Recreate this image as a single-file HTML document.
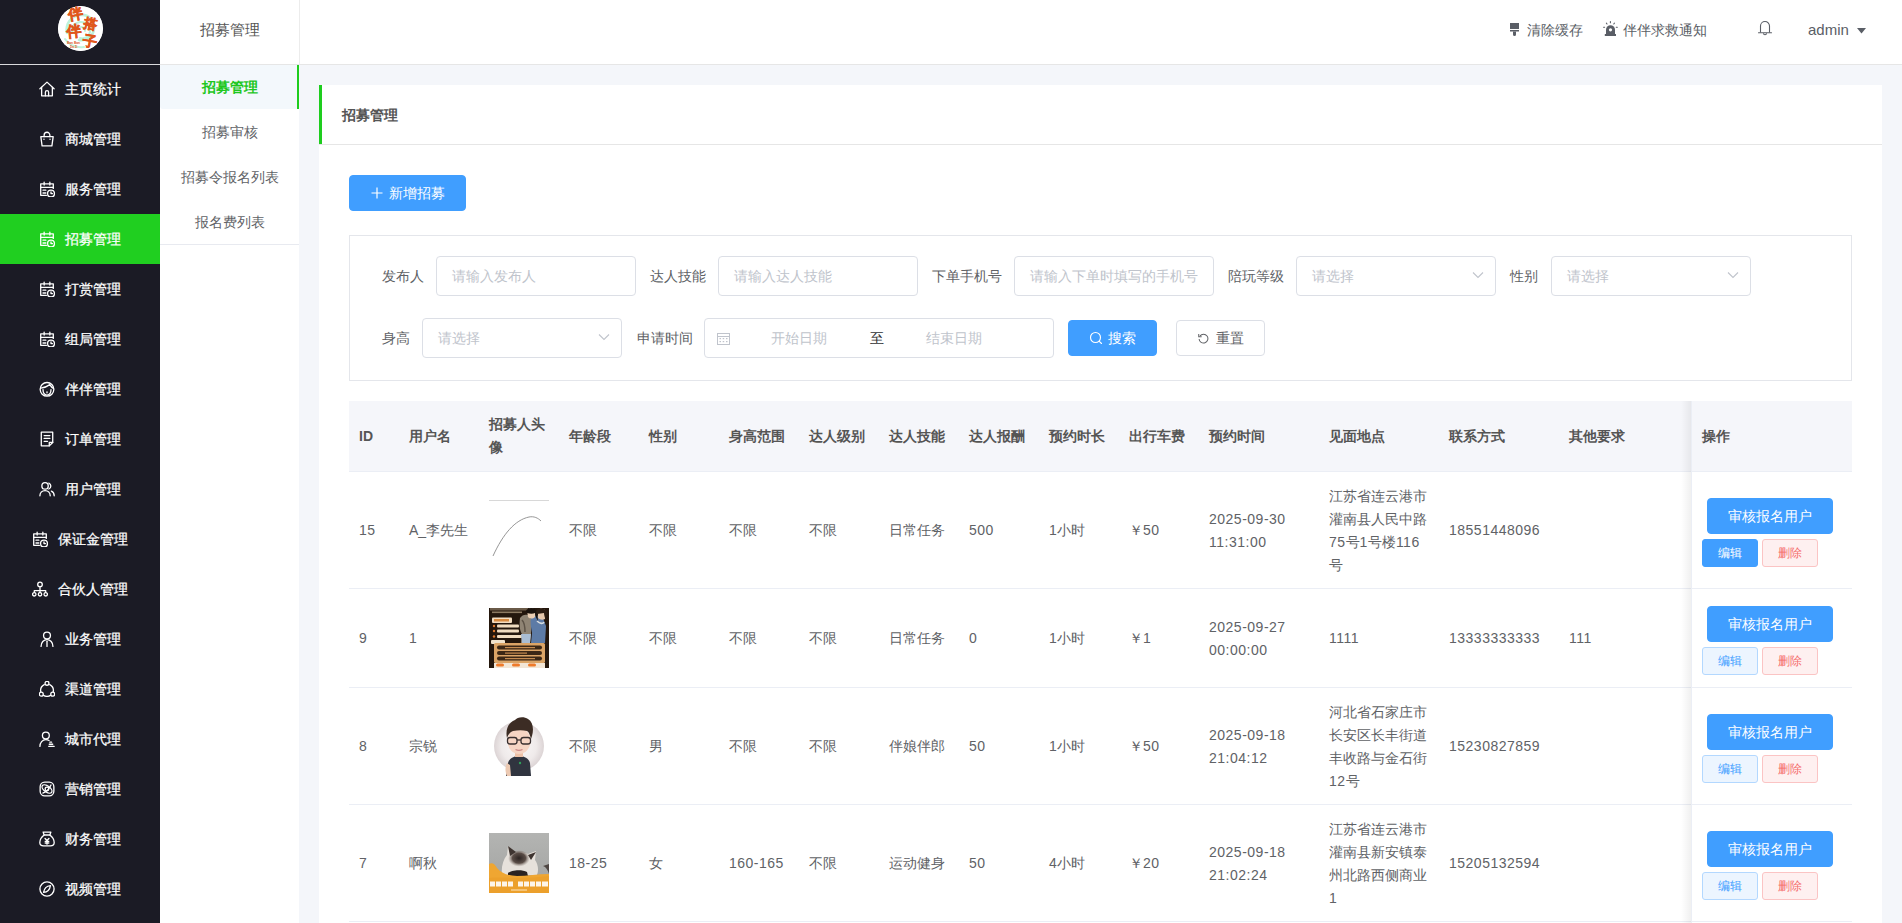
<!DOCTYPE html>
<html><head><meta charset="utf-8">
<style>
*{box-sizing:border-box;margin:0;padding:0}
html,body{width:1902px;height:923px;overflow:hidden}
body{font-family:"Liberation Sans",sans-serif;font-size:14px;color:#606266;background:#f4f6fa;position:relative}
.abs{position:absolute}
/* sidebar */
#sb{position:absolute;left:0;top:0;width:160px;height:923px;background:#1b1b25}
#sb .logo{position:absolute;left:58px;top:6px;width:45px;height:45px;border-radius:50%;background:#fff;overflow:hidden}
#sb .line{position:absolute;left:0;top:64px;width:160px;height:1px;background:#d9d9dc}
#sb .it{position:absolute;left:0;width:160px;height:50px;display:flex;align-items:center;justify-content:center;color:#fff;font-size:14px}
#sb .it span{position:relative;top:1px;-webkit-text-stroke:0.25px #fff}
#sb .it svg{width:16px;height:16px;margin-right:10px;flex:none}
#sb .it.on{background:#20cf20}
/* sidebar2 */
#sb2{position:absolute;left:160px;top:0;width:139px;height:923px;background:#fff}
#sb2 .hd{position:absolute;left:0;top:0;width:139px;height:64px;line-height:60px;text-align:center;color:#555;font-size:15px;font-weight:normal}
#sb2 .hdl{position:absolute;left:0;top:64px;width:140px;height:1px;background:#e6e6e6}
#sb2 .vl{position:absolute;left:139px;top:0;width:1px;height:64px;background:#ececec}
#sb2 .m{position:absolute;left:0;width:139px;height:45px;line-height:47px;text-align:center;color:#606266}
#sb2 .m.on{color:#1ec71e;background:#f3f8fc;border-radius:3px 0 0 3px;font-weight:bold}
#sb2 .bar{position:absolute;left:137px;top:65px;width:2px;height:44px;background:#1ecd1e}
#sb2 .bl{position:absolute;left:0;top:244px;width:139px;height:1px;background:#e8eaf0}
/* header */
#hdr{position:absolute;left:300px;top:0;width:1602px;height:64px;background:#fff}
#hdrl{position:absolute;left:299px;top:64px;width:1603px;height:1px;background:#e6e6e6}
.nav{position:absolute;top:0;height:64px;line-height:60px;color:#5a5e66;font-size:14px}
/* card */
#card{position:absolute;left:319px;top:85px;width:1563px;height:900px;background:#fff}
#card .gb{position:absolute;left:0;top:0;width:3px;height:60px;background:#1ecd1e}
#card .title{position:absolute;left:23px;top:0;height:59px;line-height:61px;color:#555;font-weight:600}
#card .hl{position:absolute;left:0;top:59px;width:1563px;height:1px;background:#e6e6e6}
.btn{position:absolute;border-radius:4px;text-align:center;font-size:14px;white-space:nowrap}
.btn-p{background:#409eff;color:#fff;border:1px solid #409eff}
.ipt{position:absolute;height:40px;border:1px solid #dcdfe6;border-radius:4px;color:#c0c4cc;line-height:38px;padding-left:15px;font-size:14px;background:#fff;white-space:nowrap;overflow:hidden}
.ipt .chev{position:absolute;right:11px;top:14px;width:12px;height:8px}
.lbl{position:absolute;line-height:40px;color:#606266;font-size:14px;white-space:nowrap}
.th{position:absolute;top:401px;height:70px;display:flex;align-items:center;line-height:23px;font-weight:bold;color:#555;font-size:14px}
.td{position:absolute;line-height:23px;color:#606266;font-size:14px;white-space:nowrap}
.n{letter-spacing:0.5px}
.eb{width:56px;height:28px;line-height:26px;font-size:12px;background:#ecf5ff;border:1px solid #b3d8ff;color:#409eff;border-radius:3px}
.ebp{width:56px;height:28px;line-height:26px;font-size:12px;background:#409eff;border:1px solid #409eff;color:#fff;border-radius:3px}
.db{width:56px;height:28px;line-height:26px;font-size:12px;background:#fef0f0;border:1px solid #fbc4c4;color:#f56c6c;border-radius:3px}
</style></head>
<body>
<!-- SIDEBAR -->
<div id="sb">
  <div class="logo"><svg width="45" height="45" viewBox="0 0 45 45">
<circle cx="22.5" cy="22.5" r="22.5" fill="#fff"/>
<g fill="none" stroke="#bdf3dc" stroke-linecap="round">
<path d="M9 27c-2-9 4-17 13-18 9-1 15 6 14 14-1 8-8 12-15 11" stroke-width="2.6"/>
<path d="M14 27c-1-6 3-11 9-11 6 0 10 5 9 10-1 5-5 7-10 6" stroke-width="2.2"/>
<path d="M19 26c0-3 2-5 4-5 3 0 4 2 4 4" stroke-width="1.8"/>
<path d="M7 33c4 6 11 9 19 8" stroke-width="2"/>
</g>
<g fill="#e0571c" stroke="#e0571c" stroke-width="0.5" font-family="Liberation Serif,serif" font-weight="bold">
<text x="10" y="13" font-size="15" transform="rotate(-10 15 6)">伴</text>
<text x="8.5" y="30.5" font-size="15" transform="rotate(-6 15 24)">伴</text>
<text x="26" y="22" font-size="13.5" transform="rotate(12 32 16)">搭</text>
<text x="25" y="40" font-size="14.5" transform="rotate(10 31 33)">子</text>
</g>
<g fill="#e0571c" font-family="Liberation Sans" font-weight="bold"><text x="9" y="38" font-size="3.2">Ban Ban</text><text x="12" y="42" font-size="3">Da Zi</text></g>
</svg></div>
  <div class="line"></div>
  <div class="it" style="top:64px"><svg width="16" height="16" viewBox="1 1 14 14" ><g fill="none" stroke="#fff" stroke-width="1.15" stroke-linecap="round" stroke-linejoin="round"><path d="M1.8 7.8L8 2l6.2 5.8"/><path d="M3.3 6.6V14h9.4V6.6"/><path d="M6.6 14v-3.2a1.4 1.4 0 0 1 2.8 0V14"/></g></svg><span>主页统计</span></div>
<div class="it" style="top:114px"><svg width="16" height="16" viewBox="1 1 14 14" ><g fill="none" stroke="#fff" stroke-width="1.15" stroke-linecap="round" stroke-linejoin="round"><path d="M2.6 6h10.8l-1.1 8H3.7z"/><path d="M5.5 6V4.6a2.5 2.5 0 0 1 5 0V6"/><path d="M5.3 8.2h.1M10.6 8.2h.1"/></g></svg><span>商城管理</span></div>
<div class="it" style="top:164px"><svg width="16" height="16" viewBox="1 1 14 14" ><g fill="none" stroke="#fff" stroke-width="1.15" stroke-linecap="round" stroke-linejoin="round"><path d="M7.5 13.5H2.5V3.5H13.5V7.5"/><path d="M2.5 6.5H13.5"/><path d="M5.5 2v2.5M10.5 2v2.5"/><path d="M4.5 9h2.5M4.5 11.5h2.5"/><circle cx="11.5" cy="12" r="3"/><path d="M11.5 10.5V12h1.3"/></g></svg><span>服务管理</span></div>
<div class="it on" style="top:214px"><svg width="16" height="16" viewBox="1 1 14 14" ><g fill="none" stroke="#fff" stroke-width="1.15" stroke-linecap="round" stroke-linejoin="round"><path d="M7.5 13.5H2.5V3.5H13.5V7.5"/><path d="M2.5 6.5H13.5"/><path d="M5.5 2v2.5M10.5 2v2.5"/><path d="M4.5 9h2.5M4.5 11.5h2.5"/><circle cx="11.5" cy="12" r="3"/><path d="M11.5 10.5V12h1.3"/></g></svg><span>招募管理</span></div>
<div class="it" style="top:264px"><svg width="16" height="16" viewBox="1 1 14 14" ><g fill="none" stroke="#fff" stroke-width="1.15" stroke-linecap="round" stroke-linejoin="round"><path d="M7.5 13.5H2.5V3.5H13.5V7.5"/><path d="M2.5 6.5H13.5"/><path d="M5.5 2v2.5M10.5 2v2.5"/><path d="M4.5 9h2.5M4.5 11.5h2.5"/><circle cx="11.5" cy="12" r="3"/><path d="M11.5 10.5V12h1.3"/></g></svg><span>打赏管理</span></div>
<div class="it" style="top:314px"><svg width="16" height="16" viewBox="1 1 14 14" ><g fill="none" stroke="#fff" stroke-width="1.15" stroke-linecap="round" stroke-linejoin="round"><path d="M7.5 13.5H2.5V3.5H13.5V7.5"/><path d="M2.5 6.5H13.5"/><path d="M5.5 2v2.5M10.5 2v2.5"/><path d="M4.5 9h2.5M4.5 11.5h2.5"/><circle cx="11.5" cy="12" r="3"/><path d="M11.5 10.5V12h1.3"/></g></svg><span>组局管理</span></div>
<div class="it" style="top:364px"><svg width="16" height="16" viewBox="1 1 14 14" ><g fill="none" stroke="#fff" stroke-width="1.15" stroke-linecap="round" stroke-linejoin="round"><circle cx="8" cy="8.3" r="6"/><path d="M2.6 7.2C5 7 8 6 10.5 4.2 11.5 6 12.5 7 13.6 7.4"/><path d="M4.5 8.5c0 3 1.5 4.8 3.5 4.8s3.5-1.8 3.5-4.8"/><path d="M8 10.5v.8"/></g></svg><span>伴伴管理</span></div>
<div class="it" style="top:414px"><svg width="16" height="16" viewBox="1 1 14 14" ><g fill="none" stroke="#fff" stroke-width="1.15" stroke-linecap="round" stroke-linejoin="round"><path d="M3 2h10v9l-3 3H3z"/><path d="M10 14v-3h3"/><path d="M5.5 5h5M5.5 7.5h5M5.5 10h3"/></g></svg><span>订单管理</span></div>
<div class="it" style="top:464px"><svg width="16" height="16" viewBox="1 1 14 14" ><g fill="none" stroke="#fff" stroke-width="1.15" stroke-linecap="round" stroke-linejoin="round"><circle cx="6.3" cy="5.3" r="2.8"/><path d="M1.8 14c0-2.8 2-4.6 4.5-4.6s4.5 1.8 4.5 4.6"/><path d="M9.6 2.8a2.8 2.8 0 0 1 0 5.2"/><path d="M11.8 9.8c1.5.6 2.5 2.2 2.5 4.2"/></g></svg><span>用户管理</span></div>
<div class="it" style="top:514px"><svg width="16" height="16" viewBox="1 1 14 14" ><g fill="none" stroke="#fff" stroke-width="1.15" stroke-linecap="round" stroke-linejoin="round"><path d="M7.5 13.5H2.5V3.5H13.5V7.5"/><path d="M2.5 6.5H13.5"/><path d="M5.5 2v2.5M10.5 2v2.5"/><path d="M4.5 9h2.5M4.5 11.5h2.5"/><circle cx="11.5" cy="12" r="3"/><path d="M11.5 10.5V12h1.3"/></g></svg><span>保证金管理</span></div>
<div class="it" style="top:564px"><svg width="16" height="16" viewBox="1 1 14 14" ><g fill="none" stroke="#fff" stroke-width="1.15" stroke-linecap="round" stroke-linejoin="round"><circle cx="8" cy="4" r="2"/><path d="M8 6v3M3 11V9.5h10V11M8 9v2"/><circle cx="3" cy="12.6" r="1.5"/><circle cx="8" cy="12.6" r="1.5"/><circle cx="13" cy="12.6" r="1.5"/></g></svg><span>合伙人管理</span></div>
<div class="it" style="top:614px"><svg width="16" height="16" viewBox="1 1 14 14" ><g fill="none" stroke="#fff" stroke-width="1.15" stroke-linecap="round" stroke-linejoin="round"><circle cx="8" cy="5" r="3"/><path d="M2.8 14.5c0-3.5 2.3-6 5.2-6s5.2 2.5 5.2 6"/><path d="M8 10v4.5"/></g></svg><span>业务管理</span></div>
<div class="it" style="top:664px"><svg width="16" height="16" viewBox="1 1 14 14" ><g fill="none" stroke="#fff" stroke-width="1.15" stroke-linecap="round" stroke-linejoin="round"><path d="M5.6 4.2A6 6 0 0 0 2.6 10.8M10.4 4.2A6 6 0 0 1 13.4 10.8M5 13.6a6 6 0 0 0 6 0"/><circle cx="8" cy="3" r="1.7"/><circle cx="3" cy="12.5" r="1.7"/><circle cx="13" cy="12.5" r="1.7"/></g></svg><span>渠道管理</span></div>
<div class="it" style="top:714px"><svg width="16" height="16" viewBox="1 1 14 14" ><g fill="none" stroke="#fff" stroke-width="1.15" stroke-linecap="round" stroke-linejoin="round"><circle cx="7" cy="5" r="3"/><path d="M1.8 14.5c0-3.3 2.2-6 5.2-6 1 0 2 .3 2.8.8"/><path d="M10.5 10.8h1.5M10 12.6h3M9.5 14.4h4.8"/></g></svg><span>城市代理</span></div>
<div class="it" style="top:764px"><svg width="16" height="16" viewBox="1 1 14 14" ><g fill="none" stroke="#fff" stroke-width="1.15" stroke-linecap="round" stroke-linejoin="round"><rect x="2" y="2" width="12" height="12" rx="4"/><circle cx="8" cy="8" r="1.6"/><ellipse cx="8" cy="8" rx="5" ry="2.6" transform="rotate(35 8 8)"/><path d="M4.5 11.5c2-.5 5-3 7-7"/></g></svg><span>营销管理</span></div>
<div class="it" style="top:814px"><svg width="16" height="16" viewBox="1 1 14 14" ><g fill="none" stroke="#fff" stroke-width="1.15" stroke-linecap="round" stroke-linejoin="round"><path d="M5.5 4.5L4.6 2h6.8l-.9 2.5"/><path d="M5.5 4.5h5c2.3 1.8 3.8 4.2 3.8 6.6 0 2-1.3 2.9-3.3 2.9H5c-2 0-3.3-.9-3.3-2.9 0-2.4 1.5-4.8 3.8-6.6z"/><path d="M6.3 7.5L8 9.3l1.7-1.8M8 9.3v3.2M6.4 10h3.2M6.4 11.5h3.2"/></g></svg><span>财务管理</span></div>
<div class="it" style="top:864px"><svg width="16" height="16" viewBox="1 1 14 14" ><g fill="none" stroke="#fff" stroke-width="1.15" stroke-linecap="round" stroke-linejoin="round"><circle cx="8" cy="8" r="6.2"/><path d="M11 5c-3 .3-5.5 2.7-6 6 3-.3 5.5-2.7 6-6z"/></g></svg><span>视频管理</span></div>
</div>
<div id="sb2">
  <div class="hd">招募管理</div>
  <div class="vl"></div>
  <div class="m on" style="top:64px">招募管理</div>
  <div class="hdl"></div>
  <div class="bar"></div>
  <div class="m" style="top:109px">招募审核</div>
  <div class="m" style="top:154px">招募令报名列表</div>
  <div class="m" style="top:199px">报名费列表</div>
  <div class="bl"></div>
</div>
<div id="hdr"></div>
<div id="hdrl"></div>
<div class="abs" style="left:1509px;top:23px;line-height:0"><svg width="11" height="13" viewBox="0 0 11 13"><g fill="#5a5e66"><rect x="1" y="0" width="9" height="6"/><rect x="1" y="7" width="9" height="1.5"/><path d="M4 8.5h3V11.5a1.5 1.5 0 0 1-3 0z"/></g></svg></div>
<div class="nav" style="left:1527px">清除缓存</div>
<div class="abs" style="left:1603px;top:21px;line-height:0"><svg width="15" height="16" viewBox="0 0 15 16"><g fill="#5a5e66"><path d="M3 13V8.8a4.5 4.5 0 0 1 9 0V13z"/><rect x="1.8" y="13" width="11.2" height="2"/></g><circle cx="7.5" cy="8.8" r="1.6" fill="#fff"/><g stroke="#5a5e66" stroke-width="1.1" stroke-linecap="round"><path d="M7.4 0.6v1.2M3.4 2.2l.6.8M11.4 2.2l-.6.8M0.6 6.3h1M13.3 6.3h1"/></g></svg></div>
<div class="nav" style="left:1623px">伴伴求救通知</div>
<div class="abs" style="left:1757px;top:20px;line-height:0"><svg width="16" height="17" viewBox="0 0 16 17"><g fill="none" stroke="#5a5e66" stroke-width="1.1"><path d="M3.5 12.5V6a4.5 4.5 0 0 1 9 0v6.5"/><path d="M1.5 12.8h13" stroke-linecap="round"/><path d="M6.5 13.2a1.5 1.5 0 0 0 3 0"/></g></svg></div>
<div class="nav" style="left:1808px;font-size:15px">admin</div>
<div class="abs" style="left:1857px;top:28px;line-height:0"><svg width="9" height="6" viewBox="0 0 9 6"><path d="M0 0h9L4.5 5.5z" fill="#5a5e66"/></svg></div>
<div id="card">
  <div class="gb"></div>
  <div class="title">招募管理</div>
  <div class="hl"></div>
</div>
<div class="btn btn-p" style="left:349px;top:175px;width:117px;height:36px;line-height:34px"><svg width="12" height="12" viewBox="0 0 12 12" style="vertical-align:-1px;margin-right:6px"><path d="M6 0.5v11M0.5 6h11" stroke="#fff" stroke-width="1.2"/></svg>新增招募</div>
<div class="abs" style="left:349px;top:235px;width:1503px;height:146px;border:1px solid #e4e6eb"></div>
<div class="lbl" style="left:382px;top:256px">发布人</div>
<div class="ipt" style="left:436px;top:256px;width:200px">请输入发布人</div>
<div class="lbl" style="left:650px;top:256px">达人技能</div>
<div class="ipt" style="left:718px;top:256px;width:200px">请输入达人技能</div>
<div class="lbl" style="left:932px;top:256px">下单手机号</div>
<div class="ipt" style="left:1014px;top:256px;width:200px">请输入下单时填写的手机号</div>
<div class="lbl" style="left:1228px;top:256px">陪玩等级</div>
<div class="ipt" style="left:1296px;top:256px;width:200px">请选择<svg class="chev" viewBox="0 0 12 8"><path d="M1 1.5l5 5 5-5" fill="none" stroke="#c0c4cc" stroke-width="1.1"/></svg></div>
<div class="lbl" style="left:1510px;top:256px">性别</div>
<div class="ipt" style="left:1551px;top:256px;width:200px">请选择<svg class="chev" viewBox="0 0 12 8"><path d="M1 1.5l5 5 5-5" fill="none" stroke="#c0c4cc" stroke-width="1.1"/></svg></div>
<div class="lbl" style="left:382px;top:318px">身高</div>
<div class="ipt" style="left:422px;top:318px;width:200px">请选择<svg class="chev" viewBox="0 0 12 8"><path d="M1 1.5l5 5 5-5" fill="none" stroke="#c0c4cc" stroke-width="1.1"/></svg></div>
<div class="lbl" style="left:637px;top:318px">申请时间</div>
<div class="ipt" style="left:704px;top:318px;width:350px;padding:0"><svg width="13" height="13" viewBox="0 0 13 13" style="position:absolute;left:12px;top:13px"><g fill="none" stroke="#c0c4cc" stroke-width="1"><rect x="0.5" y="1.5" width="12" height="11"/><path d="M0.5 4.5h12"/></g><g fill="#c0c4cc"><rect x="2.5" y="6" width="1.5" height="1.2"/><rect x="5.7" y="6" width="1.5" height="1.2"/><rect x="9" y="6" width="1.5" height="1.2"/><rect x="2.5" y="9" width="1.5" height="1.2"/><rect x="5.7" y="9" width="1.5" height="1.2"/><rect x="9" y="9" width="1.5" height="1.2"/></g></svg><span class="abs" style="left:66px">开始日期</span><span class="abs" style="left:165px;color:#303133">至</span><span class="abs" style="left:221px">结束日期</span></div>
<div class="btn btn-p" style="left:1068px;top:320px;width:89px;height:36px;line-height:34px"><svg width="14" height="14" viewBox="0 0 14 14" style="vertical-align:-2px;margin-right:5px"><g fill="none" stroke="#fff" stroke-width="1.15"><circle cx="6.5" cy="6.5" r="5"/><path d="M10.3 10.3l2.2 2.2" stroke-linecap="round"/></g></svg>搜索</div>
<div class="btn" style="left:1176px;top:320px;width:89px;height:36px;line-height:34px;border:1px solid #dcdfe6;color:#606266;background:#fff"><svg width="11" height="11" viewBox="0 0 12 12" style="vertical-align:-1px;margin-right:7px;margin-left:1px"><g fill="none" stroke="#606266" stroke-width="1.1"><path d="M2.2 3.2A4.8 4.8 0 1 1 1.2 6.5"/></g><path d="M0.8 1v3.2H4" fill="none" stroke="#606266" stroke-width="1.1"/></svg>重置</div>
<div class="abs" style="left:349px;top:401px;width:1503px;height:70px;background:#f5f6fa"></div>
<div class="th" style="left:359px">ID</div>
<div class="th" style="left:409px">用户名</div>
<div class="th" style="left:489px">招募人头<br>像</div>
<div class="th" style="left:569px">年龄段</div>
<div class="th" style="left:649px">性别</div>
<div class="th" style="left:729px">身高范围</div>
<div class="th" style="left:809px">达人级别</div>
<div class="th" style="left:889px">达人技能</div>
<div class="th" style="left:969px">达人报酬</div>
<div class="th" style="left:1049px">预约时长</div>
<div class="th" style="left:1129px">出行车费</div>
<div class="th" style="left:1209px">预约时间</div>
<div class="th" style="left:1329px">见面地点</div>
<div class="th" style="left:1449px">联系方式</div>
<div class="th" style="left:1569px">其他要求</div>
<div class="th" style="left:1702px">操作</div>
<div class="abs" style="left:349px;top:471px;width:1503px;height:1px;background:#ebeef5"></div>
<div class="td" style="left:359px;top:519.0px"><span class="n">15</span></div>
<div class="td" style="left:409px;top:519.0px">A_李先生</div>
<div class="abs" style="left:489px;top:500px;line-height:0"><svg width="60" height="60" viewBox="0 0 60 60"><path d="M0 0.5h60" stroke="#d8d8d8" stroke-width="1"/><path d="M4 56C14 34 26 20 40 17c5-1 9 1 12 4" fill="none" stroke="#8a8a8a" stroke-width="0.9"/></svg></div>
<div class="td" style="left:569px;top:519.0px">不限</div>
<div class="td" style="left:649px;top:519.0px">不限</div>
<div class="td" style="left:729px;top:519.0px">不限</div>
<div class="td" style="left:809px;top:519.0px">不限</div>
<div class="td" style="left:889px;top:519.0px">日常任务</div>
<div class="td" style="left:969px;top:519.0px"><span class="n">500</span></div>
<div class="td" style="left:1049px;top:519.0px"><span class="n">1</span>小时</div>
<div class="td" style="left:1129px;top:519.0px">￥<span class="n">50</span></div>
<div class="td" style="left:1209px;top:507.5px"><span class="n">2025-09-30</span><br><span class="n">11:31:00</span></div>
<div class="td" style="left:1329px;top:484.5px">江苏省连云港市<br>灌南县人民中路<br><span class="n">75</span>号<span class="n">1</span>号楼<span class="n">116</span><br>号</div>
<div class="td" style="left:1449px;top:519.0px"><span class="n">18551448096</span></div>
<div class="td" style="left:1569px;top:519.0px"></div>
<div class="btn btn-p" style="left:1707px;top:498px;width:126px;height:36px;line-height:34px">审核报名用户</div>
<div class="btn ebp" style="left:1702px;top:539px">编辑</div>
<div class="btn db" style="left:1762px;top:539px">删除</div>
<div class="abs" style="left:349px;top:588px;width:1503px;height:1px;background:#ebeef5"></div>
<div class="td" style="left:359px;top:627.0px"><span class="n">9</span></div>
<div class="td" style="left:409px;top:627.0px"><span class="n">1</span></div>
<div class="abs" style="left:489px;top:608px;line-height:0"><svg width="60" height="60" viewBox="0 0 60 60"><rect width="60" height="60" fill="#24170d"/>
<rect x="1" y="0" width="38" height="2.5" fill="#6a5a48"/>
<rect x="3" y="3.5" width="30" height="1.6" fill="#8c7a62"/>
<rect x="3" y="9.5" width="20" height="5.5" rx="1" fill="#f2dcc0"/><rect x="5" y="11" width="15" height="2.5" fill="#d88a40"/>
<g fill="#e07a30"><circle cx="5" cy="18" r="1.2"/><circle cx="5" cy="23" r="1.2"/><circle cx="5" cy="28.5" r="1.2"/></g>
<g fill="#f0dcc0"><rect x="8" y="16.5" width="22" height="3" rx="1"/><rect x="8" y="21.5" width="22" height="3" rx="1"/><rect x="8" y="27" width="28" height="3" rx="1"/></g>
<path d="M31 10c2-3 5-4 8-3l3 4v15l-1 9h-9l1-9c-2-3-3-8-2-16z" fill="#8f8474"/>
<path d="M33 12c2 2 3 6 3 12" stroke="#5e5448" stroke-width="1.5" fill="none"/>
<path d="M32 26h10l-1 9h-8z" fill="#a9bdd4"/>
<path d="M42 9c3-2 9-2 12 1l3 8-1 17H42l1-10c-1-5-2-11-1-16z" fill="#5d7ba6"/>
<path d="M48 13c3 3 6 3 7 1" stroke="#d8dde0" stroke-width="1.6" fill="none"/>
<path d="M38 2c3-2 7-2 9 1l-1 6c-2 2-5 2-7 0z" fill="#e9cdb2"/>
<path d="M37 3c1-4 9-4 11 0l1 10c-2-3-3-6-3-8-2 1-5 1-8 0z" fill="#1a120c"/>
<path d="M49 2c2-2 7-2 8 2l-1 7c-2 1-5 1-7-1z" fill="#e6c7ab"/>
<path d="M47 3c2-4 10-3 11 1l-1 9c-1-3-2-6-2-8l-7 1z" fill="#2a1c12"/>
<rect x="2" y="32" width="14" height="4" rx="1" fill="#f1e3cc"/>
<rect x="5" y="35" width="51" height="20" rx="1.5" fill="#dba466"/>
<g fill="#3b2716"><rect x="8" y="37.5" width="45" height="4" rx="2"/><rect x="8" y="43" width="45" height="4" rx="2"/><rect x="8" y="48.5" width="45" height="4" rx="2"/></g>
<g fill="#c48a50"><rect x="16" y="39" width="30" height="1.2"/><rect x="16" y="44.5" width="22" height="1.2"/><rect x="16" y="50" width="30" height="1.2"/></g>
<rect x="5" y="55" width="51" height="5" fill="#f2e6d6"/>
<g fill="#ee7a2a"><rect x="7" y="55.5" width="8" height="3" rx="1.5"/><rect x="23" y="55.5" width="8" height="3" rx="1.5"/><rect x="39" y="55.5" width="8" height="3" rx="1.5"/></g>
</svg></div>
<div class="td" style="left:569px;top:627.0px">不限</div>
<div class="td" style="left:649px;top:627.0px">不限</div>
<div class="td" style="left:729px;top:627.0px">不限</div>
<div class="td" style="left:809px;top:627.0px">不限</div>
<div class="td" style="left:889px;top:627.0px">日常任务</div>
<div class="td" style="left:969px;top:627.0px"><span class="n">0</span></div>
<div class="td" style="left:1049px;top:627.0px"><span class="n">1</span>小时</div>
<div class="td" style="left:1129px;top:627.0px">￥<span class="n">1</span></div>
<div class="td" style="left:1209px;top:615.5px"><span class="n">2025-09-27</span><br><span class="n">00:00:00</span></div>
<div class="td" style="left:1329px;top:627.0px"><span class="n">1111</span></div>
<div class="td" style="left:1449px;top:627.0px"><span class="n">13333333333</span></div>
<div class="td" style="left:1569px;top:627.0px"><span class="n">111</span></div>
<div class="btn btn-p" style="left:1707px;top:606px;width:126px;height:36px;line-height:34px">审核报名用户</div>
<div class="btn eb" style="left:1702px;top:647px">编辑</div>
<div class="btn db" style="left:1762px;top:647px">删除</div>
<div class="abs" style="left:349px;top:687px;width:1503px;height:1px;background:#ebeef5"></div>
<div class="td" style="left:359px;top:735.0px"><span class="n">8</span></div>
<div class="td" style="left:409px;top:735.0px">宗锐</div>
<div class="abs" style="left:489px;top:716px;line-height:0"><svg width="60" height="60" viewBox="0 0 60 60"><defs><radialGradient id="g3" cx="50%" cy="50%" r="50%"><stop offset="0" stop-color="#fbf9f9"/><stop offset="0.7" stop-color="#efeaea"/><stop offset="1" stop-color="#dcd4d5"/></radialGradient></defs>
<circle cx="30" cy="30" r="25" fill="url(#g3)"/>
<path d="M19 47c1-4 5-7 11-7s10 3 11 7l1 13H17z" fill="#30343f"/>
<path d="M18 47c-2 4-2 9 0 13h4l-1-11z" fill="#ecc9b2"/>
<circle cx="31" cy="47" r="1.2" fill="#2fa05a"/>
<rect x="26" y="36" width="8" height="5" fill="#eec2a8"/>
<ellipse cx="30" cy="25" rx="11.5" ry="13" fill="#f6d5c4"/>
<path d="M18 22c-2-9 2-16 8-18 2-3 9-4 13-1 5 3 6 10 4 17l-1 3c-1-4-2-7-4-8-4-1-9-1-14 0-3 1-5 4-6 7z" fill="#3c2c24"/>
<g fill="none" stroke="#3a3030" stroke-width="1.3"><rect x="18.5" y="21.5" width="9.5" height="6.5" rx="2.5"/><rect x="32" y="21.5" width="9.5" height="6.5" rx="2.5"/><path d="M28 24h4"/></g>
<path d="M26.5 33.5c2 1 5 1 7 0" stroke="#c88" stroke-width="1.2" fill="none"/>
</svg></div>
<div class="td" style="left:569px;top:735.0px">不限</div>
<div class="td" style="left:649px;top:735.0px">男</div>
<div class="td" style="left:729px;top:735.0px">不限</div>
<div class="td" style="left:809px;top:735.0px">不限</div>
<div class="td" style="left:889px;top:735.0px">伴娘伴郎</div>
<div class="td" style="left:969px;top:735.0px"><span class="n">50</span></div>
<div class="td" style="left:1049px;top:735.0px"><span class="n">1</span>小时</div>
<div class="td" style="left:1129px;top:735.0px">￥<span class="n">50</span></div>
<div class="td" style="left:1209px;top:723.5px"><span class="n">2025-09-18</span><br><span class="n">21:04:12</span></div>
<div class="td" style="left:1329px;top:700.5px">河北省石家庄市<br>长安区长丰街道<br>丰收路与金石街<br><span class="n">12</span>号</div>
<div class="td" style="left:1449px;top:735.0px"><span class="n">15230827859</span></div>
<div class="td" style="left:1569px;top:735.0px"></div>
<div class="btn btn-p" style="left:1707px;top:714px;width:126px;height:36px;line-height:34px">审核报名用户</div>
<div class="btn eb" style="left:1702px;top:755px">编辑</div>
<div class="btn db" style="left:1762px;top:755px">删除</div>
<div class="abs" style="left:349px;top:804px;width:1503px;height:1px;background:#ebeef5"></div>
<div class="td" style="left:359px;top:852.0px"><span class="n">7</span></div>
<div class="td" style="left:409px;top:852.0px">啊秋</div>
<div class="abs" style="left:489px;top:833px;line-height:0"><svg width="60" height="60" viewBox="0 0 60 60"><defs><linearGradient id="g4" x1="0" y1="0" x2="0" y2="1"><stop offset="0" stop-color="#b3b4b2"/><stop offset="1" stop-color="#a2a3a1"/></linearGradient>
<radialGradient id="m4" cx="50%" cy="45%" r="50%"><stop offset="0" stop-color="#2c2422"/><stop offset="0.6" stop-color="#5a4d47"/><stop offset="1" stop-color="#9a8e86" stop-opacity="0"/></radialGradient></defs>
<rect width="60" height="60" fill="url(#g4)"/>
<path d="M13 42c-1-8 1-15 5-20l1-9 8 7c4-1 8-1 12 1l8-3-1 9c3 4 4 10 2 15z" fill="#e6e1db"/>
<ellipse cx="30" cy="26" rx="11" ry="8.5" fill="url(#m4)"/>
<path d="M19 13l2 10 6-4zM47 19l-5 8-3-5z" fill="#3e3430"/>
<path d="M19 40c3-3 14-4 19-1l1 4H19z" fill="#2a2322"/>
<path d="M54 33c3 1 5 4 6 8v-10z" fill="#4f4743"/>
<path d="M0 31c3-2 6 0 8 4 4 5 11 8 20 8 10 0 21-2 32-2V60H0z" fill="#efa632"/>
<path d="M0 45c10-1 20 0 30 0s20-1 30-2v17H0z" fill="#eca02c"/>
<g fill="#fff" opacity=".9"><rect x="1" y="48.5" width="5" height="5"/><rect x="7" y="48.5" width="5" height="5"/><rect x="13" y="48.5" width="5" height="5"/><rect x="19" y="48.5" width="5" height="5"/><rect x="29" y="48.5" width="5" height="5"/><rect x="35" y="48.5" width="5" height="5"/><rect x="41" y="48.5" width="5" height="5"/><rect x="47" y="48.5" width="5" height="5"/><rect x="53" y="48.5" width="6" height="5"/></g>
<rect x="22" y="56.5" width="16" height="1" fill="#fbe6c0"/>
</svg></div>
<div class="td" style="left:569px;top:852.0px"><span class="n">18-25</span></div>
<div class="td" style="left:649px;top:852.0px">女</div>
<div class="td" style="left:729px;top:852.0px"><span class="n">160-165</span></div>
<div class="td" style="left:809px;top:852.0px">不限</div>
<div class="td" style="left:889px;top:852.0px">运动健身</div>
<div class="td" style="left:969px;top:852.0px"><span class="n">50</span></div>
<div class="td" style="left:1049px;top:852.0px"><span class="n">4</span>小时</div>
<div class="td" style="left:1129px;top:852.0px">￥<span class="n">20</span></div>
<div class="td" style="left:1209px;top:840.5px"><span class="n">2025-09-18</span><br><span class="n">21:02:24</span></div>
<div class="td" style="left:1329px;top:817.5px">江苏省连云港市<br>灌南县新安镇泰<br>州北路西侧商业<br><span class="n">1</span></div>
<div class="td" style="left:1449px;top:852.0px"><span class="n">15205132594</span></div>
<div class="td" style="left:1569px;top:852.0px"></div>
<div class="btn btn-p" style="left:1707px;top:831px;width:126px;height:36px;line-height:34px">审核报名用户</div>
<div class="btn eb" style="left:1702px;top:872px">编辑</div>
<div class="btn db" style="left:1762px;top:872px">删除</div>
<div class="abs" style="left:349px;top:921px;width:1503px;height:1px;background:#ebeef5"></div>
<div class="abs" style="left:1681px;top:401px;width:10px;height:522px;background:linear-gradient(to right,rgba(0,0,0,0),rgba(0,0,0,0.06))"></div>
<div class="abs" style="left:1691px;top:401px;width:1px;height:522px;background:#ebeef5"></div>
</body></html>
